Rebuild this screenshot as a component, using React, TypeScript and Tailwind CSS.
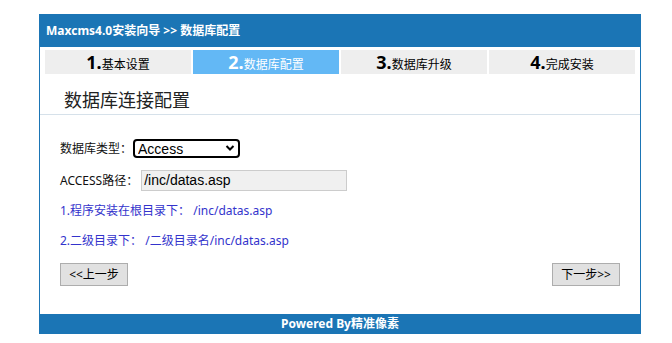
const STEPS = [
  { n: "1.", label: "基本设置", active: false },
  { n: "2.", label: "数据库配置", active: true },
  { n: "3.", label: "数据库升级", active: false },
  { n: "4.", label: "完成安装", active: false },
];

const FONT = "font-['Microsoft_YaHei','Noto_Sans','Noto_Sans_CJK_SC',sans-serif]";

export default function App() {
  return (
    <div className={`min-h-[343px] bg-white pt-[14px] pl-[39px] ${FONT}`}>
      <div className="w-[602px]">
        <div className="flex h-[33px] items-center bg-[#1b75b5] pl-[7px] text-[12px] font-bold text-white">
          Maxcms4.0安装向导 &gt;&gt; 数据库配置
        </div>

        <div className="border-x border-[#1b75b5]">
          <div className="flex gap-[2px] px-[5px] pt-[3px]">
            {STEPS.map((s) => (
              <div
                key={s.n}
                className={`flex h-[24px] w-[146px] items-baseline justify-center pt-[3px] ${
                  s.active ? "bg-[#63b8f5] text-white" : "bg-[#eeeeee] text-black"
                }`}
              >
                <span className="text-[18px] font-bold leading-[18px]">{s.n}</span>
                <span className="text-[12px] leading-[18px]">{s.label}</span>
              </div>
            ))}
          </div>

          <div className="h-[41px] border-b border-[#d6e1ea] pl-[24px] pt-[14px] text-[18px] leading-[24px] text-[#222]">
            数据库连接配置
          </div>

          <div className="pl-[20px] pt-[24px] text-[12px] text-[#111]">
            <div className="flex h-[20px] items-center">
              <span>数据库类型：</span>
              <div className="relative ml-[1px]">
                <select className="h-[19px] w-[107px] appearance-none rounded-[4px] border-2 border-black bg-white pl-[3px] font-['Liberation_Sans',Arial,sans-serif] text-[14px] leading-none text-black outline-none">
                  <option>Access</option>
                </select>
                <svg
                  className="pointer-events-none absolute right-[5px] top-[5px]"
                  width="10"
                  height="8"
                  viewBox="0 0 10 8"
                >
                  <path d="M1.5 2 L5 5.5 L8.5 2" fill="none" stroke="black" strokeWidth="2" />
                </svg>
              </div>
            </div>

            <div className="mt-[11px] flex h-[21px] items-center">
              <span>ACCESS路径：</span>
              <input
                readOnly
                value="/inc/datas.asp"
                className="ml-[3px] h-[21px] w-[206px] border border-[#cccccc] bg-[#f0f0f0] pl-[2px] font-['Liberation_Sans',Arial,sans-serif] text-[14px] text-black outline-none"
              />
            </div>

            <div className="mt-[10px] h-[20px] leading-[20px] text-[#3333cc]">
              1.程序安装在根目录下： /inc/datas.asp
            </div>
            <div className="mt-[10px] h-[20px] leading-[20px] text-[#3333cc]">
              2.二级目录下： /二级目录名/inc/datas.asp
            </div>

            <div className="mt-[12px] flex justify-between pr-[20px] pb-[28px]">
              <button className="h-[23px] w-[68px] border border-[#adadad] bg-[#e1e1e1] text-[12px] text-black">
                &lt;&lt;上一步
              </button>
              <button className="h-[23px] w-[68px] border border-[#adadad] bg-[#e1e1e1] text-[12px] text-black">
                下一步&gt;&gt;
              </button>
            </div>
          </div>
        </div>

        <div className="flex h-[20px] items-center justify-center bg-[#1b75b5] text-[12px] font-bold text-white">
          Powered By精准像素
        </div>
      </div>
    </div>
  );
}
